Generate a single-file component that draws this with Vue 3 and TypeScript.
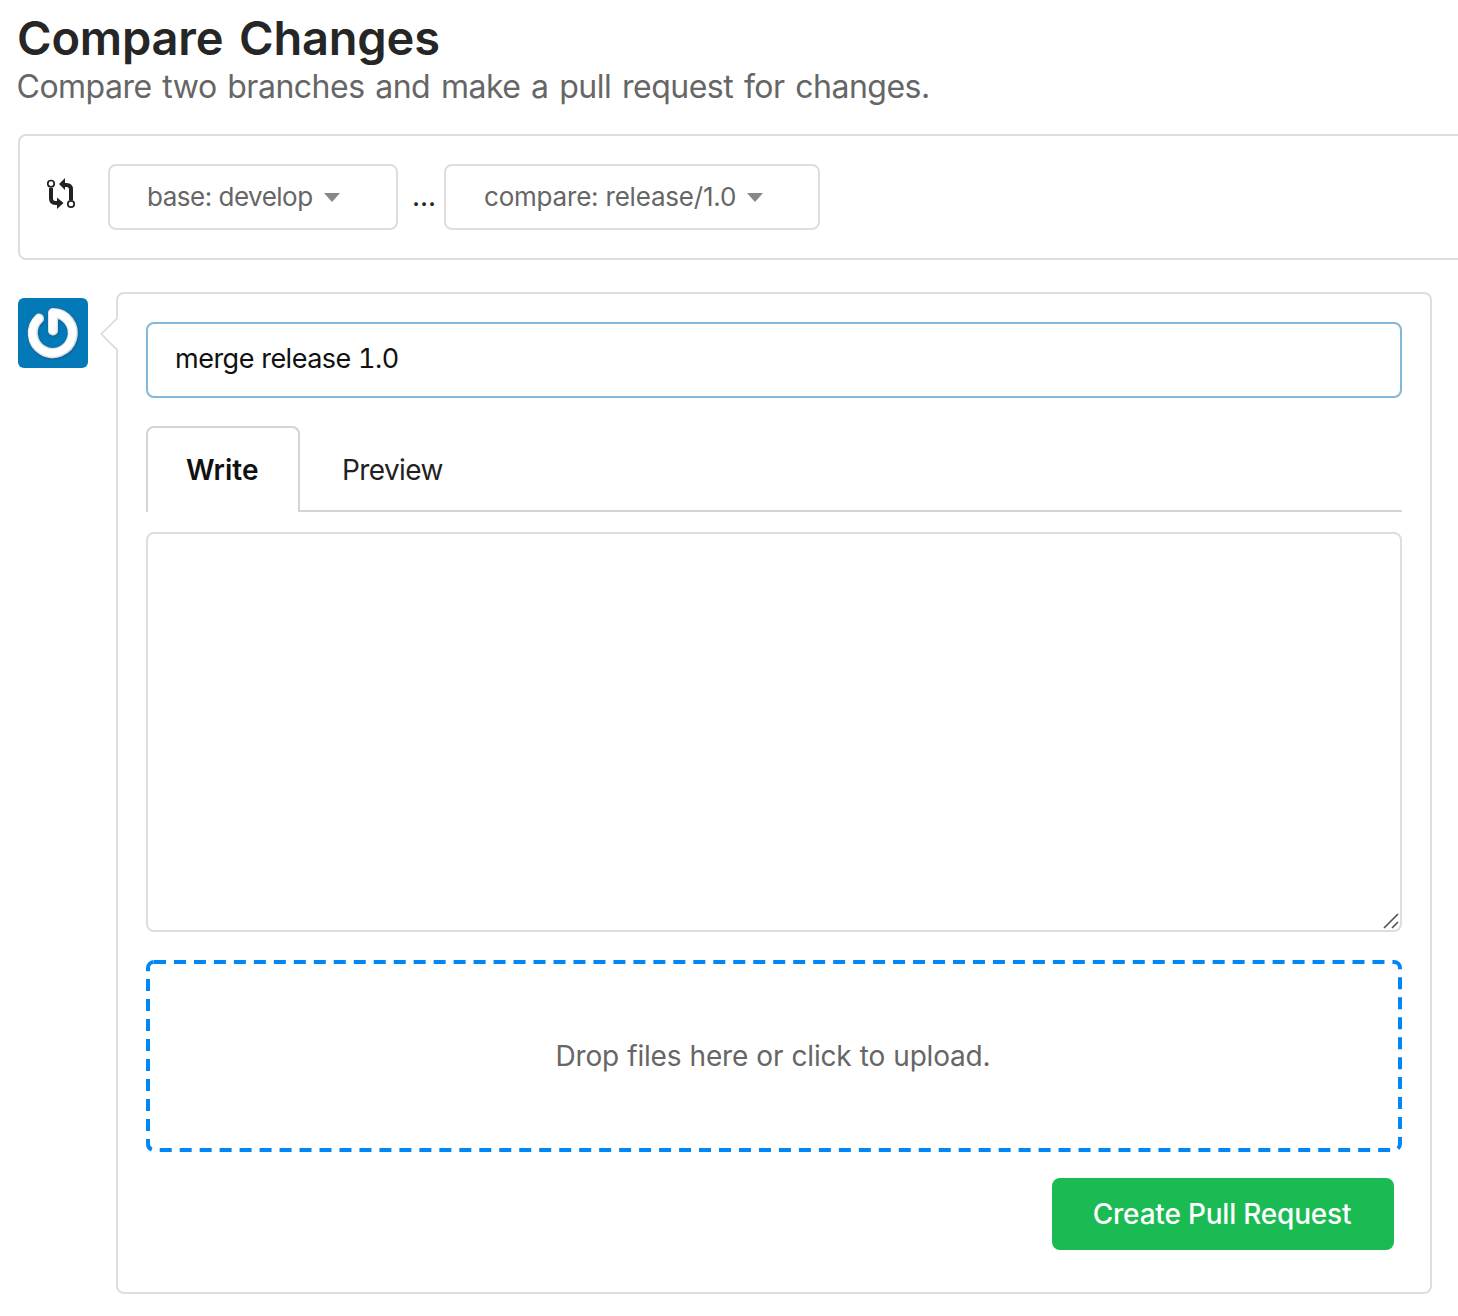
<script setup lang="ts">
import { ref } from 'vue'

interface Branch {
  role: string
  name: string
  cls: string
}

const branches: Branch[] = [
  { role: 'base', name: 'develop', cls: 'base' },
  { role: 'compare', name: 'release/1.0', cls: 'compare' },
]
const title = ref<string>('merge release 1.0')
const body = ref<string>('')
</script>

<template>
  <main class="page">
    <h1>Compare Changes</h1>
    <p class="sub">Compare two branches and make a pull request for changes.</p>

    <section class="range">
      <svg class="git" width="30" height="34" viewBox="0 0 30 34">
        <g fill="none" stroke="#222" stroke-width="4">
          <path d="M4 11v10.500q0 4.500 4.500 4.500h2.500" />
          <path d="M24 23V12.500q0-4.500-4.500-4.500h-2.500" />
        </g>
        <path d="M10 20.500l6.500 5.500-6.500 6z M18 1v12l-6-6z" fill="#222" />
        <g fill="#fff" stroke="#222" stroke-width="1.700">
          <circle cx="4" cy="6.700" r="3.200" />
          <circle cx="24" cy="27" r="3.200" />
        </g>
      </svg>
      <template v-for="(b, i) in branches" :key="b.role">
        <span v-if="i" class="dots">...</span>
        <button class="branch" :class="b.cls">
          <span>{{ b.role }}: {{ b.name }}</span>
          <i class="caret"></i>
        </button>
      </template>
    </section>

    <section class="compose">
      <svg class="avatar" width="70" height="70" viewBox="0 0 70 70">
        <defs>
          <filter id="bevel" x="-20%" y="-20%" width="140%" height="140%">
            <feDropShadow dx=".5" dy="1" stdDeviation="1" flood-color="#003a66" flood-opacity=".5" />
          </filter>
        </defs>
        <rect width="70" height="70" rx="6" fill="#0479b7" />
        <g fill="none" stroke-linecap="round" stroke-linejoin="round" filter="url(#bevel)">
          <path d="M21 20.500A20 20 0 1 0 35 15V32.500" stroke="#e2e2e2" stroke-width="10" />
          <path d="M20.700 20.200A20 20 0 1 0 34.800 14.800V32.200" stroke="#fff" stroke-width="7.500" />
        </g>
      </svg>

      <div class="card">
        <svg class="pointer" width="18" height="36" viewBox="0 0 18 36">
          <path d="M18 1L1.500 18 18 34.500z" fill="#fff" />
          <path d="M17.500 2L1.200 18 17.500 34.300" fill="none" stroke="#ddd" stroke-width="1.800" />
        </svg>
        <input v-model="title" class="title" type="text" />
        <nav class="tabs">
          <a class="tab active">Write</a>
          <a class="tab">Preview</a>
        </nav>
        <div class="editor">
          <textarea v-model="body"></textarea>
          <svg class="grip" width="16" height="16" viewBox="0 0 16 16">
            <path d="M1 15L15 1M9 15l6-6" stroke="#555" stroke-width="1.700" />
          </svg>
        </div>
        <div class="drop">
          <svg class="dash" width="1256" height="192" viewBox="0 0 1256 192">
            <path
              d="M8 2H1248A6 6 0 0 1 1254 8V184A6 6 0 0 1 1248 190H8A6 6 0 0 1 2 184V8A6 6 0 0 1 8 2"
              fill="none" stroke="#0087f7" stroke-width="4" stroke-dasharray="12 7.975"
            />
          </svg>
          <span>Drop files here or click to upload.</span>
        </div>
        <div class="actions">
          <button class="create">Create Pull Request</button>
        </div>
      </div>
    </section>
  </main>
</template>

<style>
body {
  background: #fff;
}
</style>

<style scoped>
.page {
  box-sizing: border-box;
  height: 1316px;
  padding: 8px 0 0 18px;
  overflow: hidden;
  font-family: Inter, "Liberation Sans", sans-serif;
  font-size: 28px;
  color: #222;
}
h1 {
  margin: 0 0 0 -1px;
  font-size: 47px;
  font-weight: 600;
  line-height: 59px;
  letter-spacing: -0.2px;
  word-spacing: 4px;
  color: #262626;
  white-space: nowrap;
}
.sub {
  margin: 0 0 0 -1.5px;
  font-size: 32px;
  line-height: 40px;
  letter-spacing: -0.5px;
  word-spacing: 2.2px;
  color: #666;
  white-space: nowrap;
}
.range {
  box-sizing: border-box;
  display: flex;
  align-items: center;
  width: 1500px;
  height: 126px;
  margin-top: 27px;
  padding-left: 27px;
  border: 2px solid #ddd;
  border-radius: 8px;
}
.git {
  flex: none;
  margin: -7px 31px 0 0;
}
.branch {
  box-sizing: border-box;
  display: flex;
  align-items: center;
  height: 66px;
  padding: 0 0 0 38px;
  border: 2px solid #ddd;
  border-radius: 8px;
  background: #fff;
  color: #666;
  font: 400 26px/60px Inter, "Liberation Sans", sans-serif;
  white-space: nowrap;
}
.base {
  width: 290px;
  padding-left: 37px;
  letter-spacing: -0.5px;
}
.compare {
  width: 376px;
  letter-spacing: -0.2px;
}
.caret {
  margin-left: 11px;
  border: 8px solid transparent;
  border-top: 9px solid #888;
  border-bottom: 0;
}
.dots {
  box-sizing: border-box;
  width: 46px;
  padding: 0 0 2px 6px;
  text-align: center;
}
.compose {
  display: flex;
  align-items: flex-start;
  margin-top: 32px;
}
.avatar {
  flex: none;
  margin: 6px 28px 0 0;
}
.card {
  box-sizing: border-box;
  position: relative;
  width: 1316px;
  height: 1002px;
  padding: 28px;
  border: 2px solid #ddd;
  border-radius: 8px;
}
.pointer {
  position: absolute;
  left: -18px;
  top: 22px;
}
.title {
  box-sizing: border-box;
  display: block;
  width: 1256px;
  height: 76px;
  padding: 0 27px 4px;
  border: 2px solid #85b7d9;
  border-radius: 8px;
  outline: 0;
  color: #111;
  font: 400 27px Inter, "Liberation Sans", sans-serif;
  font-variant-numeric: tabular-nums;
  letter-spacing: -0.5px;
  word-spacing: 0.5px;
}
.tabs {
  display: flex;
  height: 84px;
  margin-top: 28px;
  border-bottom: 2px solid #d4d4d5;
}
.tab {
  box-sizing: border-box;
  height: 86px;
  padding-left: 42px;
  line-height: 88px;
  letter-spacing: -0.6px;
}
.active {
  width: 154px;
  padding-left: 38px;
  border: 2px solid #d4d4d5;
  border-bottom: 0;
  border-radius: 8px 8px 0 0;
  background: #fff;
  color: #111;
  font-weight: 600;
  line-height: 84px;
  letter-spacing: 0;
}
.editor {
  position: relative;
  height: 400px;
  margin-top: 20px;
}
textarea {
  box-sizing: border-box;
  display: block;
  width: 1256px;
  height: 400px;
  border: 2px solid #ddd;
  border-radius: 8px;
  outline: 0;
  resize: none;
}
.grip {
  position: absolute;
  right: 3px;
  bottom: 3px;
}
.drop {
  position: relative;
  display: flex;
  align-items: center;
  justify-content: center;
  box-sizing: border-box;
  height: 192px;
  margin-top: 28px;
  padding-right: 2px;
  letter-spacing: -0.2px;
  word-spacing: 0.6px;
  color: #666;
}
.dash {
  position: absolute;
  inset: 0;
}
.actions {
  display: flex;
  justify-content: flex-end;
  margin: 26px 8px 0 0;
}
.create {
  width: 342px;
  height: 72px;
  padding: 0 2px 0 0;
  border: 0;
  border-radius: 8px;
  background: #19bb52;
  color: #fff;
  font: 500 28px Inter, "Liberation Sans", sans-serif;
  letter-spacing: -0.2px;
  white-space: nowrap;
}
</style>
